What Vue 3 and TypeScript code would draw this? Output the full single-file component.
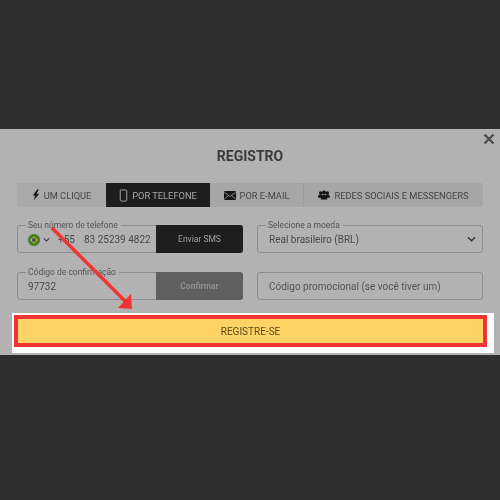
<template>
  <div class="page">
    <section class="modal">
      <svg class="close" viewBox="0 0 12 12" width="12" height="12">
        <path d="M1.500 1.500 10.500 10.500M10.500 1.500 1.500 10.500" stroke="#4d4d4d" stroke-width="2.400" fill="none" />
      </svg>
      <h1>REGISTRO</h1>

      <nav class="tabs">
        <button v-for="tab in tabs" :key="tab.label" :class="['tab', tab.cls, { active: tab.active }]">
          <svg v-if="tab.icon === 'bolt'" viewBox="0 0 10 14" width="8" height="12">
            <path d="M6.500 0 1 7.500h3L2 14l7-8.500H5.600L8.500 0z" fill="#161616" />
          </svg>
          <svg v-else-if="tab.icon === 'phone'" viewBox="0 0 9 14" width="9" height="13">
            <rect x="1" y="1" width="7" height="12" rx="1" fill="none" stroke="#a8a8a8" stroke-width="1" />
          </svg>
          <svg v-else-if="tab.icon === 'mail'" viewBox="0 0 12 9" width="12" height="9">
            <rect width="12" height="9" rx="1" fill="#161616" />
            <path d="M0.500 1.500 6 5.500l5.500-4M0.500 8 4.500 4.500M11.500 8 7.500 4.500" stroke="#a4a4a4" stroke-width="0.800" fill="none" />
          </svg>
          <svg v-else viewBox="0 0 13 10" width="12" height="10">
            <circle cx="2.800" cy="2.800" r="1.800" fill="#161616" />
            <circle cx="10.200" cy="2.800" r="1.800" fill="#161616" />
            <circle cx="6.500" cy="2.300" r="2.300" fill="#161616" />
            <path d="M0 8c0-2.500 1-3.700 2.800-3.700S5.500 5.500 5.500 8zM7.500 8c0-2.500 1-3.700 2.700-3.700S13 5.500 13 8z" fill="#161616" />
            <path d="M3 10c0-3.500 1.500-5 3.500-5s3.500 1.500 3.500 5z" fill="#161616" />
          </svg>
          <span>{{ tab.label }}</span>
        </button>
      </nav>

      <div class="form">
        <div class="field">
          <span class="legend">Seu número de telefone</span>
          <div class="value phone">
            <svg viewBox="0 0 12 12" width="12" height="12">
              <circle cx="6" cy="6" r="6" fill="#4c7a20" />
              <path d="M6 2.300 10.200 6 6 9.700 1.800 6z" fill="#c4b53a" />
              <circle cx="6" cy="6" r="2" fill="#34506e" />
            </svg>
            <svg viewBox="0 0 8 6" width="7" height="6">
              <path d="M1 1.200 4 4.200 7 1.200" stroke="#3a3a3a" stroke-width="1.300" fill="none" />
            </svg>
            <span class="number">+55<span class="national">83 25239 4822</span></span>
          </div>
          <button class="side sms">Enviar SMS</button>
        </div>
        <div class="field">
          <span class="legend">Selecione a moeda</span>
          <div class="value select">
            <span>Real brasileiro (BRL)</span>
            <svg viewBox="0 0 10 6" width="9" height="6">
              <path d="M1 1 5 5 9 1" stroke="#333" stroke-width="1.500" fill="none" />
            </svg>
          </div>
        </div>
        <div class="field">
          <span class="legend">Código de confirmação</span>
          <div class="value">97732</div>
          <button class="side confirm">Confirmar</button>
        </div>
        <div class="field">
          <div class="value muted">Código promocional (se você tiver um)</div>
        </div>
      </div>

      <div class="highlight">
        <button class="submit">REGISTRE-SE</button>
      </div>

      <svg class="arrow" viewBox="0 0 500 500" width="500" height="500">
        <path d="M52 228 126 302" stroke="#f23434" stroke-width="3.500" fill="none" />
        <path d="M132 309 118 308 131 294z" fill="#f23434" />
      </svg>
    </section>
  </div>
</template>

<script setup lang="ts">
const tabs = [
  { label: "UM CLIQUE", icon: "bolt", cls: "t1", active: false },
  { label: "POR TELEFONE", icon: "phone", cls: "t2", active: true },
  { label: "POR E-MAIL", icon: "mail", cls: "t3", active: false },
  { label: "REDES SOCIAIS E MESSENGERS", icon: "group", cls: "t4", active: false },
];
</script>

<style>
html,
body {
  background: #2f2f2f;
}
</style>

<style scoped>
.page {
  width: 500px;
  height: 500px;
  background: #2f2f2f;
  padding-top: 129px;
  box-sizing: border-box;
  font-family: Roboto, "Liberation Sans", sans-serif;
  overflow: hidden;
}

.modal {
  position: relative;
  height: 226px;
  background: #b2b2b2;
  padding: 0 17px;
  box-sizing: border-box;
  filter: blur(0.35px);
}

.close {
  position: absolute;
  top: 4px;
  right: 5px;
}

h1 {
  margin: 0;
  padding-top: 19px;
  height: 54px;
  box-sizing: border-box;
  text-align: center;
  font-size: 14px;
  line-height: 17px;
  font-weight: 700;
  color: #3b3b3b;
}

.tabs {
  display: grid;
  grid-template-columns: 89px 104px 94px 179px;
  height: 24px;
}

.tab {
  display: flex;
  align-items: center;
  justify-content: center;
  gap: 4px;
  border: none;
  padding: 0;
  font: inherit;
  font-size: 9.300px;
  color: #454545;
  background: #a6a6a6;
}

.tab.t1 {
  background: #a9a9a9;
  border-radius: 2px 0 0 2px;
}

.tab.t3 {
  border-right: 1px solid #9c9c9c;
}

.tab.t4 {
  border-radius: 0 2px 2px 0;
}

.tab.active {
  background: #1e1e1e;
  color: #a8a8a8;
}

.form {
  display: grid;
  grid-template-columns: 226px 226px;
  justify-content: space-between;
  row-gap: 19px;
  margin-top: 18px;
}

.field {
  position: relative;
  display: flex;
  height: 28px;
  box-sizing: border-box;
  border: 1px solid #8e8e8e;
  border-radius: 3px;
}

.legend {
  position: absolute;
  top: -6px;
  left: 8px;
  padding: 0 3px 0 2px;
  background: #b2b2b2;
  font-size: 8.500px;
  line-height: 10px;
  color: #555;
}

.value {
  flex: 1;
  min-width: 0;
  display: flex;
  align-items: center;
  padding-left: 10px;
  font-size: 10px;
  color: #484848;
  white-space: nowrap;
  overflow: hidden;
}

.phone {
  gap: 3px;
  padding-top: 1px;
}

.number {
  margin-left: 5px;
  overflow: hidden;
}

.national {
  margin-left: 9px;
}

.select {
  justify-content: space-between;
  padding-left: 11px;
  padding-right: 6px;
}

.muted {
  padding-left: 11px;
  color: #555;
}

.side {
  width: 87px;
  flex: none;
  margin: -1px;
  border: none;
  border-radius: 0 3px 3px 0;
  font: inherit;
  font-size: 8.500px;
}

.sms {
  background: #1e1e1e;
  color: #a0a0a0;
}

.confirm {
  background: #5f5f5f;
  color: #8f8f8f;
  font-weight: 700;
}

.highlight {
  margin: 13px -11px 0 -5px;
  height: 40px;
  padding: 2px 7px 6px 2px;
  box-sizing: border-box;
  background: #fff;
}

.submit {
  display: block;
  width: 100%;
  height: 100%;
  box-sizing: border-box;
  border: 4px solid #f23434;
  background: #fed365;
  color: #5f4a12;
  font: inherit;
  font-size: 10px;
  padding: 0;
}

.arrow {
  position: absolute;
  left: 0;
  top: -129px;
  pointer-events: none;
}
</style>
